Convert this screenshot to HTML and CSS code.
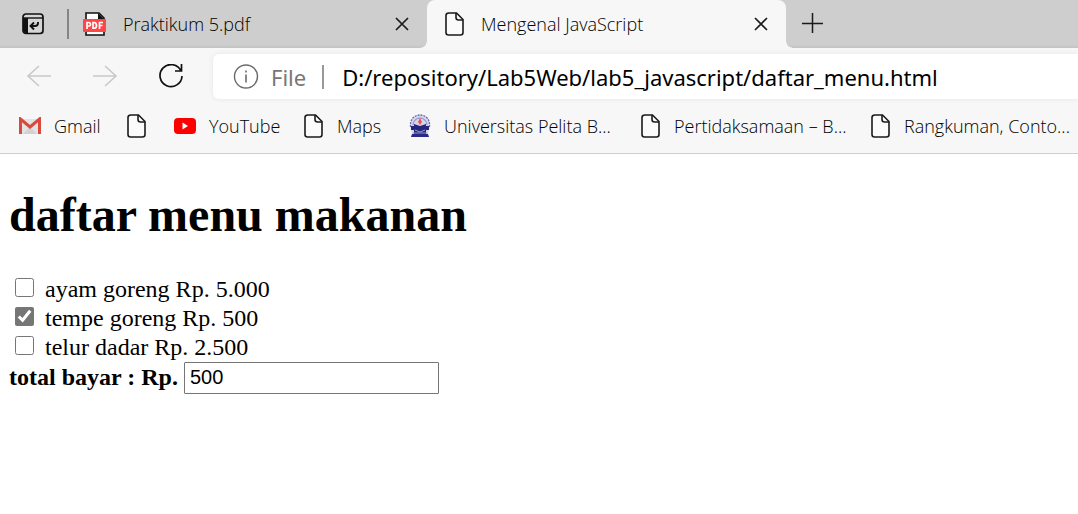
FILE: index.html
```html
<!DOCTYPE html>
<html lang="id">
<head>
<meta charset="utf-8">
<title>Mengenal JavaScript</title>
<link rel="stylesheet" href="styles.css">
</head>
<body>
<svg class="defs" aria-hidden="true">
  <symbol id="page" viewBox="0 0 20 24">
    <path d="M4 1H11.500L18 7.500V20.500Q18 23 15.500 23H3.500Q1 23 1 20.500V3.500Q1 1 4 1Z" fill="#fbfbfb" stroke="#1b1b1b" stroke-width="1.600"/>
    <path d="M11 1V5.500Q11 8 13.500 8H18" fill="none" stroke="#1b1b1b" stroke-width="1.600"/>
  </symbol>
  <symbol id="close" viewBox="0 0 14 14">
    <path d="M1 1L13 13M13 1L1 13" fill="none" stroke="#1b1b1b" stroke-width="1.700"/>
  </symbol>
</svg>
<header class="browser">
  <div class="tabstrip">
    <button class="icon-button actions" aria-label="Menu tindakan tab">
      <svg width="22" height="22" viewBox="0 0 22 22">
        <rect x="1" y="1" width="20" height="19.500" rx="3" fill="#d6d6d6" stroke="#111" stroke-width="1.700"/>
        <path d="M1 5H6V20H4Q1 20 1 17Z" fill="#111"/>
        <path d="M1 5H21" stroke="#111" stroke-width="1.400"/>
        <path d="M16 9V10Q16 13 13 13H8.500M12 9.500L8.500 13L12 16.500" fill="none" stroke="#111" stroke-width="1.900"/>
      </svg>
    </button>
    <span class="separator"></span>
    <div class="tab">
      <svg class="tab-icon" width="24" height="24" viewBox="0 0 24 24">
        <path d="M3 1H16L21 6V23H3Z" fill="#fff" stroke="#111" stroke-width="1.600"/>
        <path d="M15 1L21 7H15Z" fill="#111"/>
        <rect x="0" y="7" width="23" height="13" rx="1" fill="#ff4545"/>
        <path d="M4 17V10.500H5.500Q7.500 10.500 7.500 12.300T5.500 14H4M10 10.500V16.200H11Q13.500 16.200 13.500 13.400T11 10.500ZM16.500 17V10.500H20M16.500 13.500H19.500" fill="none" stroke="#fff" stroke-width="1.700"/>
      </svg>
      <span class="tab-title">Praktikum 5.pdf</span>
      <button class="icon-button" aria-label="Tutup tab"><svg width="14" height="14"><use href="#close"/></svg></button>
    </div>
    <div class="tab active">
      <svg class="tab-icon" width="20" height="24"><use href="#page"/></svg>
      <span class="tab-title">Mengenal JavaScript</span>
      <button class="icon-button" aria-label="Tutup tab"><svg width="14" height="14"><use href="#close"/></svg></button>
    </div>
    <button class="icon-button new-tab" aria-label="Tab baru">
      <svg width="22" height="22" viewBox="0 0 22 22"><path d="M10.500 0V20M0 10.500H21" stroke="#1b1b1b" stroke-width="1.500"/></svg>
    </button>
  </div>
  <div class="toolbar">
    <button class="icon-button" aria-label="Kembali"><svg width="26" height="24" viewBox="0 0 26 24"><path d="M25 11H2M13 1L2 11L13 21" fill="none" stroke="#c9c9c9" stroke-width="1.600"/></svg></button>
    <button class="icon-button" aria-label="Maju"><svg width="26" height="24" viewBox="0 0 26 24"><path d="M1 11H24M13 1L24 11L13 21" fill="none" stroke="#c9c9c9" stroke-width="1.600"/></svg></button>
    <button class="icon-button" aria-label="Muat ulang"><svg width="26" height="26" viewBox="0 0 26 26"><path d="M23 7A11 11 0 1 0 24 12M23.500 0V7H17" fill="none" stroke="#111" stroke-width="1.700"/></svg></button>
    <div class="address">
      <svg width="26" height="26" viewBox="0 0 26 26"><circle cx="13" cy="12.500" r="11.500" fill="none" stroke="#6b6b6b" stroke-width="1.400"/><path d="M13 10.500V18.500M13 6.500V8.500" stroke="#6b6b6b" stroke-width="1.600"/></svg>
      <span class="scheme">File</span>
      <input class="url" type="text" aria-label="Alamat" value="D:/repository/Lab5Web/lab5_javascript/daftar_menu.html">
    </div>
  </div>
  <nav class="bookmarks" aria-label="Bookmark">
    <a href="#"><svg width="22" height="18" viewBox="0 0 22 18"><path d="M2 2H20V17H2Z" fill="#e3e3e3"/><path d="M4 17L11 10L18 17Z" fill="#d2d2d2"/><path d="M1.500 17V2L11 10L20.500 2V17" fill="none" stroke="#d94a3d" stroke-width="3"/></svg>Gmail</a>
    <a href="#" aria-label="Halaman"><svg width="20" height="24"><use href="#page"/></svg></a>
    <a href="#"><svg width="23" height="18" viewBox="0 0 23 18"><rect x="1" y="1" width="22" height="16" rx="4" fill="#f00"/><path d="M9.500 5.500L15 9L9.500 12.500Z" fill="#fff"/></svg>YouTube</a>
    <a href="#"><svg width="20" height="24"><use href="#page"/></svg>Maps</a>
    <a href="#"><svg width="22" height="24" viewBox="0 0 22 24">
      <path d="M1 11A10 10 0 0 1 21 11L19 20H3Z" fill="#d5d5ec"/>
      <path d="M1.500 13V10A9.500 9 0 0 1 20.500 10V13" fill="none" stroke="#6667ad" stroke-width="1.300" stroke-dasharray="2 1"/>
      <path d="M4 11A7 7 0 0 1 18 11" fill="none" stroke="#8586be"/>
      <path d="M11 4L13 8L11 11L9 8Z" fill="#ef5548"/>
      <path d="M5 10L11 12L17 10V12H20V16H17V20H5V16H2V12H5Z" fill="#26267f"/>
      <path d="M6 16L11 18L16 16M4 19H18" fill="none" stroke="#9a9acb"/>
      <path d="M3 20H19L20 23H2Z" fill="#29298a"/>
    </svg>Universitas Pelita B...</a>
    <a href="#"><svg width="20" height="24"><use href="#page"/></svg>Pertidaksamaan – B...</a>
    <a href="#"><svg width="20" height="24"><use href="#page"/></svg>Rangkuman, Conto...</a>
  </nav>
</header>
<main class="content">
  <h1>daftar menu makanan</h1>
  <form>
    <label class="menu-item"><input type="checkbox">ayam goreng Rp. 5.000</label>
    <label class="menu-item"><input type="checkbox" checked>tempe goreng Rp. 500</label>
    <label class="menu-item"><input type="checkbox">telur dadar Rp. 2.500</label>
    <div class="total">
      <label for="total">total bayar : Rp.</label>
      <input id="total" type="text" value="500">
    </div>
  </form>
</main>
</body>
</html>
```
FILE: styles.css
```css
* { box-sizing: border-box; }

body {
  margin: 0;
  background: #fff;
  color: #000;
  font-family: "Liberation Serif", serif;
  font-size: 24px;
  overflow-x: hidden;
}

svg { display: block; flex: none; }
.defs { position: absolute; width: 0; height: 0; }

.browser {
  background: #f7f7f7;
  border-bottom: 1px solid #cfcfcf;
  font-family: "Open Sans", sans-serif;
  font-size: 18px;
  font-weight: 300;
  color: #000;
}

.icon-button {
  display: flex;
  flex: none;
  padding: 0;
  border: 0;
  background: none;
}

.tabstrip {
  display: flex;
  align-items: center;
  height: 48px;
  background: linear-gradient(#cecece 45px, #c2c2c2);
}

.actions { margin-left: 22px; }

.separator {
  width: 2px;
  height: 30px;
  margin: 0 14px 0 23px;
  background: #858585;
}

.tab {
  display: flex;
  flex: 0 1 344px;
  align-items: center;
  height: 48px;
  padding-right: 18px;
}

.tab-icon { margin-right: 16px; }
.tab-title { flex: 1; white-space: nowrap; }

.tab.active {
  position: relative;
  flex-basis: 359px;
  padding-left: 18px;
  border-radius: 8px 8px 0 0;
  background: #f7f7f7;
}

.tab.active::before,
.tab.active::after {
  content: "";
  position: absolute;
  bottom: 0;
  width: 6px;
  height: 6px;
}

.tab.active::before {
  right: 100%;
  background: radial-gradient(circle at 0 0, transparent 5px, #f7f7f7 6px);
}

.tab.active::after {
  left: 100%;
  background: radial-gradient(circle at 100% 0, transparent 5px, #f7f7f7 6px);
}

.new-tab { margin-left: 16px; }

.toolbar {
  display: flex;
  align-items: center;
  gap: 40px;
  padding: 6px 0 4px 26px;
}

.address {
  display: flex;
  flex: 1;
  align-items: center;
  height: 45px;
  margin-left: -11px;
  padding-left: 20px;
  border-radius: 6px 0 0 6px;
  background: #fff;
  box-shadow: 0 0 5px #e4e4e4;
  font-family: "Noto Sans", sans-serif;
  font-size: 22px;
  font-weight: 400;
}

.scheme {
  margin-left: 12px;
  padding-right: 16px;
  border-right: 2px solid #999;
  color: #777;
  line-height: 24px;
}

.url {
  flex: 1;
  min-width: 0;
  padding: 0 0 0 18px;
  border: 0;
  outline: 0;
  background: none;
  color: #000;
  font: inherit;
}

.bookmarks {
  display: grid;
  grid-template-columns: 108px 46px 131px 105px 232px 230px auto;
  align-items: center;
  height: 50px;
  padding: 0 0 4px 19px;
}

.bookmarks a {
  display: flex;
  align-items: center;
  gap: 13px;
  color: inherit;
  text-decoration: none;
  white-space: nowrap;
}

.content { padding: 33px 9px; }

h1 {
  margin: 0 0 33px;
  font-size: 48px;
  line-height: 55px;
}

.menu-item {
  display: flex;
  align-items: center;
  line-height: 29px;
}

.menu-item input {
  width: 19px;
  height: 19px;
  margin: 0 11px 4px 6px;
  accent-color: #767676;
}

.total {
  display: flex;
  gap: 6px;
  font-weight: bold;
  line-height: 30px;
}

.total input {
  width: 255px;
  height: 32px;
  padding: 0 5px 2px;
  border: 1px solid #767676;
  border-radius: 1px;
  font: 20px "Liberation Sans", sans-serif;
}
```
